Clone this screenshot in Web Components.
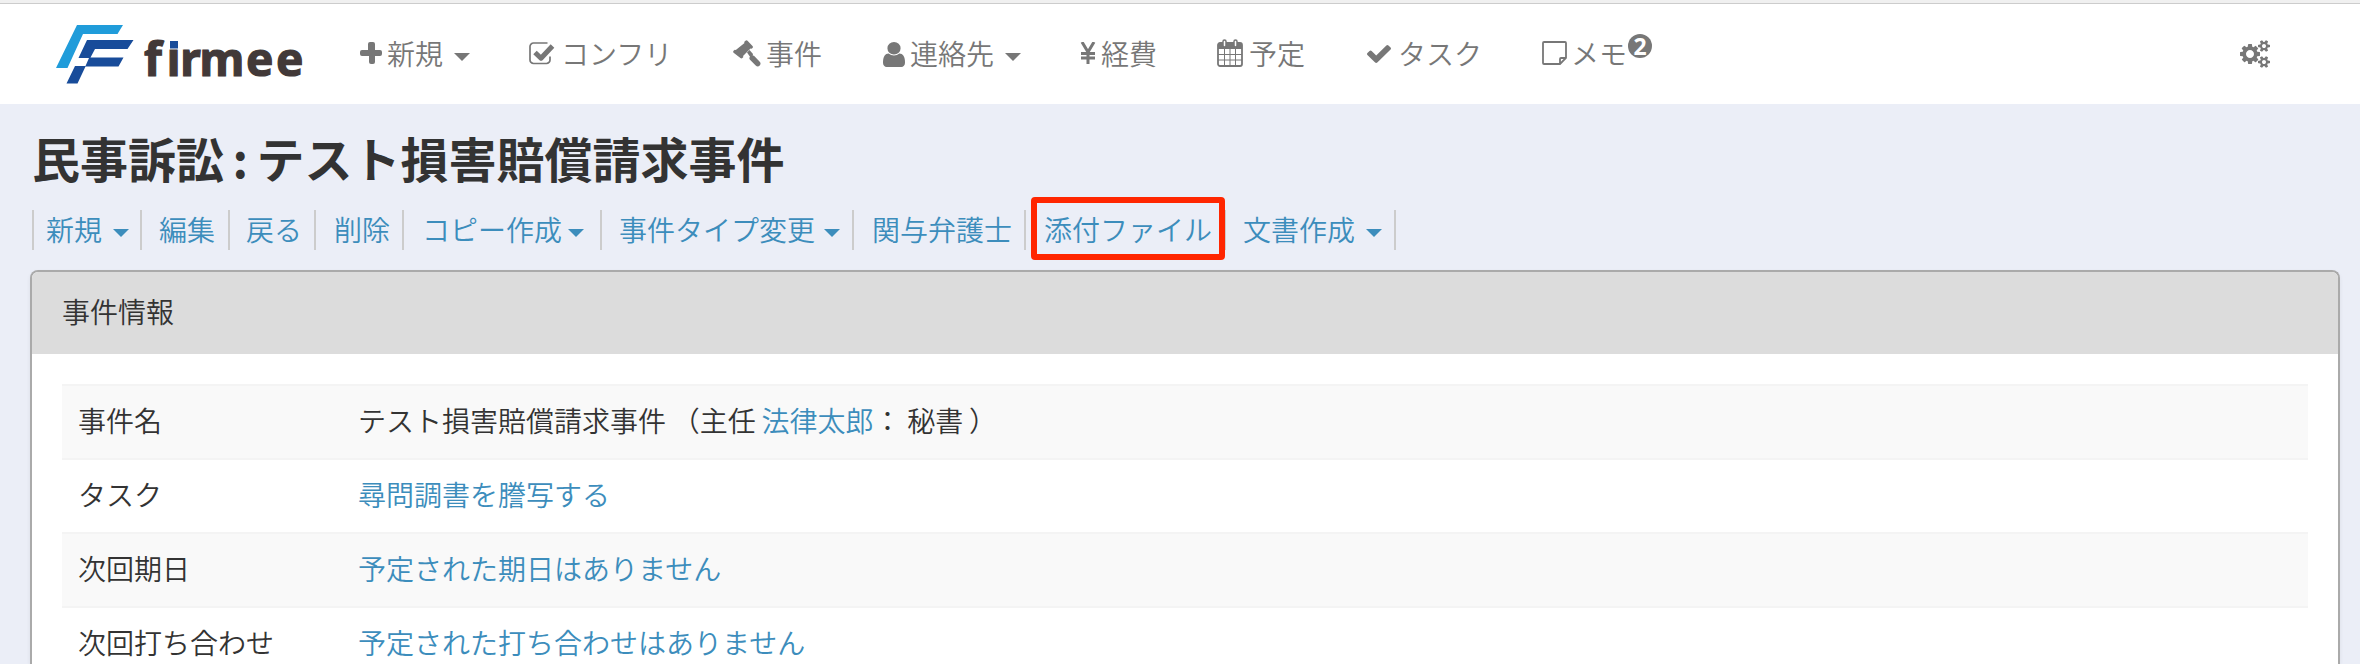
<!DOCTYPE html>
<html lang="ja"><head><meta charset="utf-8"><title>firmee</title>
<style>
html,body{margin:0;height:664px;overflow:hidden;background:#ebeef7}
body{font-family:"Noto Sans CJK JP",sans-serif;font-size:28px;font-weight:350;color:#333;line-height:40px}
</style></head><body>
<firmee-app></firmee-app>
<script>
const define=(name,html,after)=>{const t=document.createElement('template');t.innerHTML=html;
customElements.define(name,class extends HTMLElement{constructor(){super();this.attachShadow({mode:'open'}).append(t.content.cloneNode(true));}
connectedCallback(){if(after)after(this,this.shadowRoot);}});};

const icons={
plus:[22,22,'0 0 22 22','<path d="M8 2a2 2 0 0 1 2-2h3a2 2 0 0 1 2 2v6h5a2 2 0 0 1 2 2v2a2 2 0 0 1-2 2h-5v6a2 2 0 0 1-2 2h-2a2 2 0 0 1-2-2v-6H2a2 2 0 0 1-2-2v-2a2 2 0 0 1 2-2h6z"/>'],
confli:[26,23,'0 0 26 23','<path d="M18.500 1H4.500A3.500 3.500 0 0 0 1 4.500v13.500A3.500 3.500 0 0 0 4.500 21.500h13a3.500 3.500 0 0 0 3.500-3.500V14.500" fill="none" stroke="currentColor" stroke-width="1.700"/><path d="M6 10.500 12 16.200 23.500 4" fill="none" stroke="currentColor" stroke-width="5" stroke-linejoin="round"/>'],
gavel:[28,28,'0 0 28 28','<path d="M12.500.8q1-.9 2 0l5 5.200q.9 1 0 2l-1 .8-1-.4-7.500 7.500.4 1-1 1.200q-1 .9-2 0L.6 12.700q-.9-1 0-2l1.200-1 1 .4L11.500 3l-.4-1z"/><path d="M14 12.500l2.500-2.500 3.500 4-.300 1.500 1.300.300 5.500 5.700q2 2 .2 4-2 1.900-4 0l-5.700-5.700q-1.300-1.700 0-3z"/>'],
user:[22,25,'256 128 1280 1536','<path d="M1536 1399q0 109-62.500 187t-150.500 78h-854q-88 0-150.500-78t-62.500-187q0-85 8.500-160.500t31.500-152 58.500-131 94-89 134.500-34.500q131 128 313 128t313-128q76 0 134.500 34.500t94 89 58.500 131 31.500 152 8.500 160.500zm-256-887q0 159-112.500 271.500t-271.500 112.500-271.500-112.500-112.500-271.500 112.500-271.500 271.500-112.500 271.500 112.500 112.500 271.500z"/>'],
yen:[16,22,'0 0 16 22','<path d="M2 0l6 10 6-10M8 9v13M1 11.500h14M1 16h14" fill="none" stroke="currentColor" stroke-width="3"/>'],
calendar:[26,28,'0 0 26 28','<path d="M3 4h20a2 2 0 0 1 2 2v19a2 2 0 0 1-2 2H3a2 2 0 0 1-2-2V6a2 2 0 0 1 2-2z" fill="none" stroke="currentColor" stroke-width="1.800"/><path d="M1 4h24v6H1z"/><path d="M7.500 10v17M13 10v17M18.500 10v17M1 15.500h24M1 21h24" stroke="currentColor"/><rect x="6" y="1" width="3" height="7" rx="1.500" fill="#fff" stroke="currentColor" stroke-width="1.500"/><rect x="17" y="1" width="3" height="7" rx="1.500" fill="#fff" stroke="currentColor" stroke-width="1.500"/>'],
check:[24,18,'121 334 1550 1188','<path d="M1671 566q0 40-28 68l-724 724-136 136q-28 28-68 28t-68-28l-136-136-362-362q-28-28-28-68t28-68l136-136q28-28 68-28t68 28l294 295 656-657q28-28 68-28t68 28l136 136q28 28 28 68z"/>'],
note:[25,24,'0 0 25 24','<path d="M2 1h21q1 0 1 1v15l-6 6H2q-1 0-1-1V2q0-1 1-1zM24 17h-5q-1 0-1 1v5" fill="none" stroke="currentColor" stroke-width="1.800"/>'],
cogs:[30,28,'0 0 1920 1792','<path d="M896 896q0-106-75-181t-181-75-181 75-75 181 75 181 181 75 181-75 75-181zm768 512q0-52-38-90t-90-38-90 38-38 90q0 53 37.500 90.500t90.500 37.500 90.500-37.500 37.500-90.500zm0-1024q0-52-38-90t-90-38-90 38-38 90q0 53 37.500 90.500t90.500 37.500 90.500-37.500 37.500-90.500zm-384 421v185q0 10-7 19.500t-16 10.500l-155 24q-11 35-32 76 34 48 90 115 7 11 7 20 0 12-7 19-23 30-82.500 89.500t-78.500 59.500q-11 0-21-7l-115-90q-37 19-77 31-11 108-23 155-7 24-30 24h-186q-11 0-20-7.500t-10-17.500l-23-153q-34-10-75-31l-118 89q-7 7-20 7-11 0-21-8-144-133-144-160 0-9 7-19 10-14 41-53t47-61q-23-44-35-82l-152-24q-10-1-17-9.500t-7-19.500v-185q0-10 7-19.500t16-10.500l155-24q11-35 32-76-34-48-90-115-7-11-7-20 0-12 7-20 22-30 82-89t79-59q11 0 21 7l115 90q34-18 77-32 11-108 23-154 7-24 30-24h186q11 0 20 7.500t10 17.500l23 153q34 10 75 31l118-89q8-7 20-7 11 0 21 8 144 133 144 160 0 8-7 19-12 16-42 54t-45 60q23 48 34 82l152 23q10 2 17 10.500t7 19.500zm640 533v140q0 16-149 31-12 27-30 52 51 113 51 138 0 4-4 7-122 71-124 71-8 0-46-47t-52-68q-20 2-30 2t-30-2q-14 21-52 68t-46 47q-2 0-124-71-4-3-4-7 0-25 51-138-18-25-30-52-149-15-149-31v-140q0-16 149-31 13-29 30-52-51-113-51-138 0-4 4-7 4-2 35-20t59-34 30-16q8 0 46 46.500t52 67.500q20-2 30-2t30 2q51-71 92-112l6-2q4 0 124 70 4 3 4 7 0 25-51 138 17 23 30 52 149 15 149 31zm0-1024v140q0 16-149 31-12 27-30 52 51 113 51 138 0 4-4 7-122 71-124 71-8 0-46-47t-52-68q-20 2-30 2t-30-2q-14 21-52 68t-46 47q-2 0-124-71-4-3-4-7 0-25 51-138-18-25-30-52-149-15-149-31v-140q0-16 149-31 13-29 30-52-51-113-51-138 0-4 4-7 4-2 35-20t59-34 30-16q8 0 46 46.500t52 67.500q20-2 30-2t30 2q51-71 92-112l6-2q4 0 124 70 4 3 4 7 0 25-51 138 17 23 30 52 149 15 149 31z"/>']};

define('ui-icon','<style>:host{display:block;flex:none}svg{display:block;fill:currentColor}</style><div></div>',(el,r)=>{
const [w,h,vb,body]=icons[el.getAttribute('name')];
r.querySelector('div').innerHTML=`<svg width="${w}" height="${h}" viewBox="${vb}" preserveAspectRatio="none">${body}</svg>`;});

define('ui-caret','<style>:host{display:block;flex:none;border:8px solid transparent;border-top-color:currentColor;border-bottom:0}</style>');

define('firmee-logo',`<style>:host{display:block}svg{display:block;overflow:visible}text{font:700 46px "Noto Sans",sans-serif;font-variant-ligatures:none}</style>
<svg width="260" height="62" viewBox="56 24 260 62"><path fill="#209cda" d="M77 25h46l-5.500 9H83L67.500 68H56z"/><path fill="#184c9a" d="M87 40h46.500l-6 9H95l-4.500 8.500h33l-5 9H85.500L77.500 83.500H66.500l8.500-17.500h10.500l3.500-8H78.500z"/>
<text x="144 166.800 180.300 199.500 246 276" y="76" fill="#423938" stroke="#423938" stroke-width="1.200">firmee</text><path fill="#fff" d="M167.500 36h13v13h-13z"/><path fill="#184c9a" d="M170 41h8v7.500h-8z"/></svg>`);

define('nav-item',`<style>:host{display:flex;align-items:center;height:40px;width:var(--w);color:#777;flex:none;white-space:nowrap}
.i{width:var(--t);flex:none}ui-icon{transform:translateY(var(--dy,0))}ui-caret{margin:7px 0 0 11px}</style><div class="i"></div><slot></slot>`,(el,r)=>{
r.querySelector('.i').innerHTML=`<ui-icon name="${el.getAttribute('icon')}"></ui-icon>`;
if(el.hasAttribute('menu'))r.append(document.createElement('ui-caret'));});

define('note-count',`<style>:host{display:block;width:24px;height:24px;border-radius:50%;background:#777;color:#fff;font:bold 23px/24px "Noto Sans",sans-serif;text-align:center;margin:-15px 0 0 1px}</style><slot></slot>`);

define('top-bar',`<style>:host{display:flex;align-items:flex-start;box-sizing:border-box;height:104px;background:#fff;border-top:3px solid #f0f0f0;box-shadow:inset 0 1px #ccc;padding:0 90px 0 56px}
firmee-logo{width:304px;margin-top:21px}nav{display:flex;flex:1;padding-top:30px}.set{padding-top:37px;color:#777}</style>
<firmee-logo></firmee-logo><nav>
<nav-item icon="plus" menu style="--w:169px;--t:27px">新規</nav-item>
<nav-item icon="confli" style="--w:204px;--t:32px">コンフリ</nav-item>
<nav-item icon="gavel" style="--w:150px;--t:33px;--dy:1px">事件</nav-item>
<nav-item icon="user" menu style="--w:197px;--t:27px;--dy:1px">連絡先</nav-item>
<nav-item icon="yen" style="--w:137px;--t:21px">経費</nav-item>
<nav-item icon="calendar" style="--w:150px;--t:32px">予定</nav-item>
<nav-item icon="check" style="--w:175px;--t:31px;--dy:1px">タスク</nav-item>
<nav-item icon="note" style="--w:130px;--t:29px">メモ<note-count>2</note-count></nav-item>
</nav><div class="set"><ui-icon name="cogs"></ui-icon></div>`);

define('tool-link',`<style>:host{display:flex;align-items:center;box-sizing:border-box;position:relative;width:var(--w);height:40px;padding:0 0 3px var(--p);border-right:2px solid #ccc;color:#3c8dbc;white-space:nowrap;flex:none}
ui-caret{margin:9px 0 0 var(--c,11px)}.mark{position:absolute;left:5px;top:-13px;width:182px;height:51px;border:6px solid #ff2600;border-radius:4px}</style><slot></slot>`,(el,r)=>{
if(el.hasAttribute('menu'))r.append(document.createElement('ui-caret'));
if(el.hasAttribute('marked')){const m=document.createElement('div');m.className='mark';r.append(m);}});

define('tool-bar',`<style>:host{display:flex;height:40px;margin-left:32px;border-left:2px solid #ccc}</style>
<tool-link menu style="--w:108px;--p:12px">新規</tool-link>
<tool-link style="--w:88px;--p:17px">編集</tool-link>
<tool-link style="--w:86px;--p:16px">戻る</tool-link>
<tool-link style="--w:88px;--p:18px">削除</tool-link>
<tool-link menu style="--w:198px;--p:18px;--c:6px">コピー作成</tool-link>
<tool-link menu style="--w:252px;--p:17px;--c:9px">事件タイプ変更</tool-link>
<tool-link style="--w:172px;--p:18px">関与弁護士</tool-link>
<tool-link marked style="--w:200px;--p:18px">添付ファイル</tool-link>
<tool-link menu style="--w:170px;--p:17px">文書作成</tool-link>`);

define('info-row',`<style>:host{display:flex;align-items:center;box-sizing:border-box;height:74px;border-top:2px solid #f4f4f4;padding:0 0 4px 16px;word-spacing:-.5px}
:host([shaded]){background:#f9f9f9}.k{width:280px;flex:none}::slotted(a){color:#3c8dbc}</style><div class="k"></div><div><slot></slot></div>`,(el,r)=>{r.querySelector('.k').textContent=el.getAttribute('label');});

define('info-panel',`<style>:host{display:block;box-sizing:border-box;flex:1;min-height:0;margin:20px 20px 0 30px;border:2px solid #aaa;border-bottom:0;border-radius:8px 8px 0 0;background:#fff;overflow:hidden;box-shadow:0 2px 4px #0001}
header{display:flex;align-items:center;box-sizing:border-box;height:82px;background:#dcdcdc;padding:0 0 5px 30px}.b{padding:30px 30px 0}</style><header><slot name="title"></slot></header><div class="b"><slot></slot></div>`);

define('firmee-app',`<style>:host{display:flex;flex-direction:column;height:664px;overflow:hidden}h1{margin:0;height:106px;box-sizing:border-box;padding:17px 0 0 32px;font-size:48px;line-height:72px;font-weight:700;white-space:pre;word-spacing:-2.500px}top-bar,h1,tool-bar{flex:none}</style>
<top-bar></top-bar><h1>民事訴訟 : テスト損害賠償請求事件</h1><tool-bar></tool-bar>
<info-panel><span slot="title">事件情報</span>
<info-row shaded label="事件名">テスト損害賠償請求事件 （主任 <a>法律太郎</a>： 秘書 ）</info-row>
<info-row label="タスク"><a>尋問調書を謄写する</a></info-row>
<info-row shaded label="次回期日"><a>予定された期日はありません</a></info-row>
<info-row label="次回打ち合わせ"><a>予定された打ち合わせはありません</a></info-row>
</info-panel>`);
</script></body></html>
